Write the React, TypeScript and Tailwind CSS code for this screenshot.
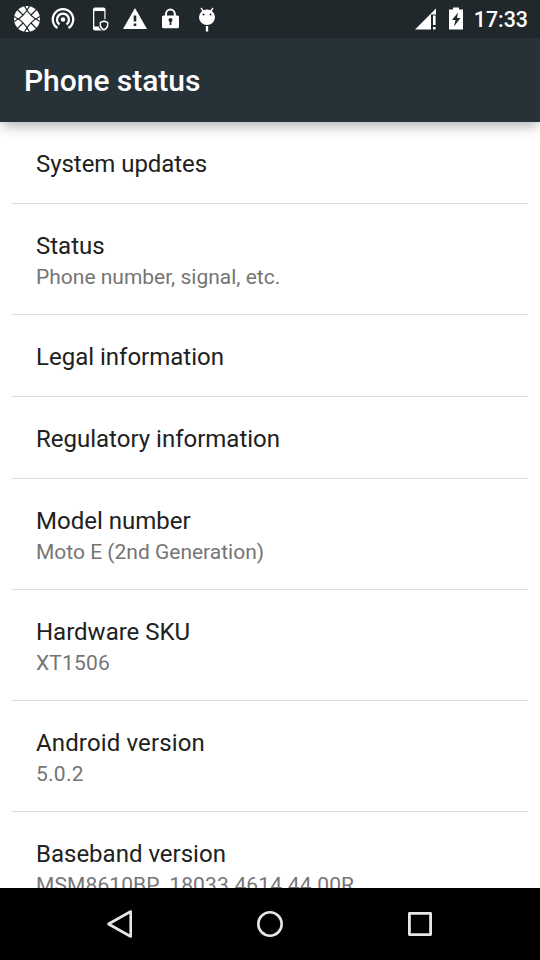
import React from 'react';

interface SettingItem {
  title: string;
  summary?: string;
  titleClass?: string;
  summaryClass?: string;
}

const items: SettingItem[] = [
  { title: 'System updates', titleClass: 'tracking-[-0.05px]' },
  { title: 'Status', summary: 'Phone number, signal, etc.' },
  { title: 'Legal information' },
  { title: 'Regulatory information' },
  { title: 'Model number', summary: 'Moto E (2nd Generation)' },
  { title: 'Hardware SKU', summary: 'XT1506', summaryClass: 'tracking-[0.2px]' },
  { title: 'Android version', summary: '5.0.2', titleClass: 'tracking-[0.14px]', summaryClass: 'tracking-[0.25px]' },
  { title: 'Baseband version', summary: 'MSM8610BP_18033.4614.44.00R', summaryClass: 'tracking-[0.11px]' },
];

const StatusBar: React.FC = () => (
  <div className="flex h-[38px] shrink-0 items-center justify-between bg-[#21282b] pr-3 pl-[9px]">
    <div className="flex items-center">
      {/* starburst */}
      <svg className="h-9 w-9" viewBox="0 0 36 36">
        <circle cx="18" cy="18" r="13" fill="#fff" />
        <g fill="none" stroke="#21282b" strokeWidth="1.2">
          <path d="M20.500 5Q15.500 15.500 5 20.500M15.500 5Q20.500 15.500 31 20.500M20.500 31Q15.500 20.500 5 15.500M15.500 31Q20.500 20.500 31 15.500" />
          <path d="M14 14L8 8M22 14L28 8M14 22L8 28M22 22L28 28" />
        </g>
      </svg>
      {/* hotspot */}
      <svg className="h-9 w-9" viewBox="0 0 36 36" fill="none" stroke="#fff" strokeWidth="2.300">
        <path d="M12.500 27A10.200 10.200 0 1 1 23.500 27" />
        <path d="M14.500 23.500A6 6 0 1 1 21.500 23.500" />
        <circle cx="18" cy="18.500" r="2.300" fill="#fff" stroke="none" />
      </svg>
      {/* device with shield */}
      <svg className="h-9 w-9" viewBox="0 0 36 36">
        <rect x="12" y="6.500" width="12.500" height="23" rx="2" fill="#fff" />
        <path d="M13.300 10h10v15.500h-10z" fill="#21282b" />
        <path d="M23 19.500l4 1.500v3q0 3-4 5q-4-2-4-5v-3z" fill="#21282b" stroke="#21282b" strokeWidth="3" />
        <path d="M23 20l3.700 1.500v2.500q0 3-3.700 5q-3.700-2-3.700-5v-2.500z" fill="#21282b" stroke="#fff" strokeWidth="1.400" />
      </svg>
      {/* warning */}
      <svg className="h-9 w-9" viewBox="0 0 36 36">
        <path d="M18 7L30 28H6z" fill="#fff" />
        <path d="M16.700 14.500h2.600v6h-2.600zM16.700 22.500h2.600v2.500h-2.600z" fill="#21282b" />
      </svg>
      {/* lock */}
      <svg className="h-9 w-9" viewBox="0 0 36 36">
        <path d="M13 16v-3a4.400 4.400 0 0 1 8.800 0V16" fill="none" stroke="#fff" strokeWidth="2" />
        <rect x="9" y="14.500" width="17" height="12.700" rx="1.500" fill="#fff" />
        <circle cx="17.500" cy="19" r="2" fill="#21282b" />
        <path d="M16.700 19.500h1.700v4.500h-1.700z" fill="#21282b" />
      </svg>
      {/* android head */}
      <svg className="h-9 w-9" viewBox="0 0 36 36">
        <path d="M12 7l2.500 3.500M24 7l-2.500 3.500" stroke="#fff" strokeWidth="1.400" />
        <ellipse cx="18" cy="16.300" rx="8" ry="7.700" fill="#fff" />
        <circle cx="14.500" cy="13.500" r="1" fill="#21282b" />
        <circle cx="21.500" cy="13.500" r="1" fill="#21282b" />
        <path d="M18 25v5.500" stroke="#fff" strokeWidth="2.400" />
      </svg>
    </div>
    <div className="flex items-center">
      <svg className="h-6 w-[22px]" viewBox="0 0 22 24">
        <path d="M0 22.500L21 1.500v21z" fill="#fff" />
        <path d="M16 7.500h6V24h-6z" fill="#21282b" />
        <path d="M16 7l5-5V7z" fill="#fff" />
        <path d="M18 8.500h2.600v9.500h-2.600zM18 20h2.600v2.500h-2.600z" fill="#fff" />
      </svg>
      <svg className="ml-3 h-6 w-[14px]" viewBox="0 0 14 24">
        <path d="M0 2.500h4V0.500h6v2h4V22.500H0z" fill="#fff" />
        <path d="M9 5.500L3 13h3.500L5 19.500l6.500-8.500H8z" fill="#21282b" />
      </svg>
      <span className="ml-[11px] pt-0.5 text-[21.4px] leading-6 font-medium text-white">17:33</span>
    </div>
  </div>
);

const SettingRow: React.FC<SettingItem> = ({ title, summary, titleClass = '', summaryClass = '' }) => (
  <li className="border-b border-[#dedede] px-6 pt-[26px] pb-[22px]">
    <p className={`text-2xl leading-[33px] text-[#212121] ${titleClass}`}>{title}</p>
    {summary && <p className={`text-[21px] leading-[29px] text-[#757575] ${summaryClass}`}>{summary}</p>}
  </li>
);

const NavigationBar: React.FC = () => (
  <div className="flex h-[72px] shrink-0 items-center justify-center gap-[114px] bg-black">
    <svg className="h-9 w-9" viewBox="0 0 36 36" fill="none" stroke="#e6e6e6" strokeWidth="2.600" strokeLinejoin="round">
      <path d="M6.500 18L28.700 5.500v25z" />
    </svg>
    <svg className="h-9 w-9" viewBox="0 0 36 36" fill="none" stroke="#e6e6e6" strokeWidth="2.600">
      <circle cx="18" cy="18" r="11.700" />
    </svg>
    <svg className="h-9 w-9" viewBox="0 0 36 36" fill="none" stroke="#e6e6e6" strokeWidth="2.800" strokeLinejoin="round">
      <rect x="7.400" y="7.400" width="21.200" height="21.200" />
    </svg>
  </div>
);

const App: React.FC = () => {
  return (
    <div className="flex h-[960px] w-[540px] flex-col overflow-hidden bg-white font-['Roboto',sans-serif]">
      <StatusBar />
      <header className="z-10 flex h-[84px] shrink-0 items-center bg-[#263238] px-6 pt-0.5 shadow-[0_6px_12px_-2px_rgba(0,0,0,0.3)]">
        <h1 className="text-[30px] leading-9 font-medium tracking-[-0.04px] text-white">Phone status</h1>
      </header>
      <ul className="min-h-0 flex-1 overflow-hidden px-3">
        {items.map((item) => (
          <SettingRow key={item.title} {...item} />
        ))}
      </ul>
      <NavigationBar />
    </div>
  );
};

export default App;
